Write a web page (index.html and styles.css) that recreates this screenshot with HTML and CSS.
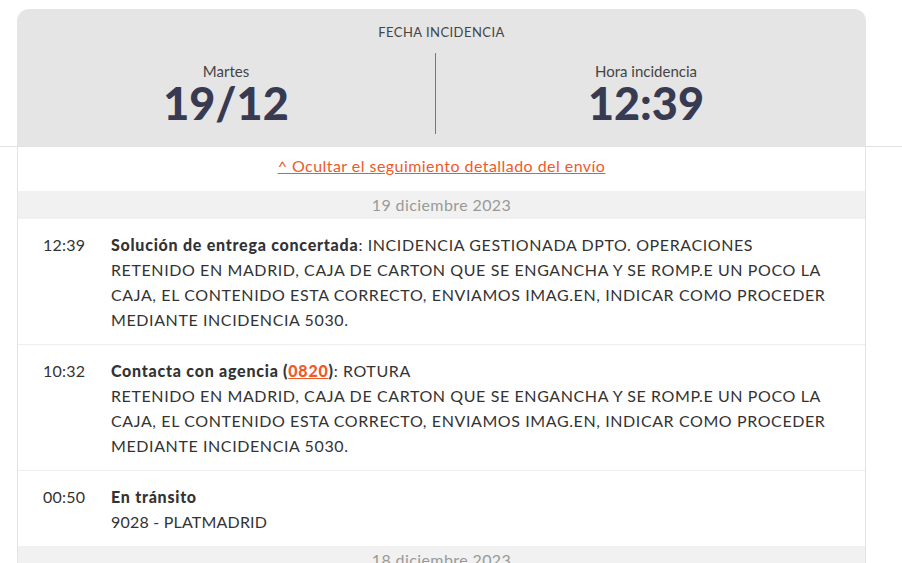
FILE: index.html
```html
<!DOCTYPE html>
<html lang="es">
<head>
<meta charset="utf-8">
<link rel="stylesheet" href="styles.css">
</head>
<body>
<div class="card">
  <div class="head">
    <div class="head-title">FECHA INCIDENCIA</div>
    <div class="head-cols">
      <div class="head-col head-col-left">
        <div class="head-label">Martes</div>
        <div class="head-value">19/12</div>
      </div>
      <div class="head-divider"></div>
      <div class="head-col head-col-right">
        <div class="head-label">Hora incidencia</div>
        <div class="head-value">12:39</div>
      </div>
    </div>
  </div>
  <div class="body">
    <div class="toggle"><a href="#">^ Ocultar el seguimiento detallado del envío</a></div>
    <div class="day">19 diciembre 2023</div>
    <div class="event">
      <div class="time">12:39</div>
      <div class="desc"><b>Solución de entrega concertada</b>: INCIDENCIA GESTIONADA DPTO. OPERACIONES RETENIDO EN MADRID, CAJA DE CARTON QUE SE ENGANCHA Y SE ROMP.E UN POCO LA CAJA, EL CONTENIDO ESTA CORRECTO, ENVIAMOS IMAG.EN, INDICAR COMO PROCEDER MEDIANTE INCIDENCIA 5030.</div>
    </div>
    <div class="event">
      <div class="time">10:32</div>
      <div class="desc"><b>Contacta con agencia (<a href="#">0820</a>)</b>: ROTURA<br>RETENIDO EN MADRID, CAJA DE CARTON QUE SE ENGANCHA Y SE ROMP.E UN POCO LA CAJA, EL CONTENIDO ESTA CORRECTO, ENVIAMOS IMAG.EN, INDICAR COMO PROCEDER MEDIANTE INCIDENCIA 5030.</div>
    </div>
    <div class="event">
      <div class="time">00:50</div>
      <div class="desc"><b>En tránsito</b><br><span class="plain">9028 - PLATMADRID</span></div>
    </div>
    <div class="day">18 diciembre 2023</div>
  </div>
</div>
</body>
</html>
```

FILE: styles.css
```css
html, body {
  margin: 0;
  padding: 0;
}
body {
  background: #fff linear-gradient(#e2e2e2, #e2e2e2) 0 146px / 100% 1px no-repeat;
  font-family: "Lato", "Open Sans", sans-serif;
  color: #333;
  height: 563px;
  overflow: hidden;
}
.card {
  margin: 9px 0 0 17px;
  width: 849px;
}
.head {
  background: #e5e5e5;
  border-radius: 12px 12px 0 0;
  height: 137px;
  box-sizing: border-box;
  padding-top: 15px;
  color: #444;
}
.head-title {
  text-align: center;
  font-size: 13px;
  line-height: 16px;
  letter-spacing: 0.45px;
}
.head-cols {
  display: flex;
  margin-top: 13px;
  height: 81px;
}
.head-col {
  text-align: center;
  padding-top: 9px;
}
.head-col-left {
  width: 418px;
  flex: none;
}
.head-col-right {
  flex: 1;
  padding-right: 10px;
}
.head-divider {
  width: 1px;
  background: #777;
}
.head-label {
  font-size: 15px;
  line-height: 18px;
}
.head-value {
  font-size: 45px;
  font-weight: 900;
  line-height: 46px;
  color: #383a52;
}
.body {
  border-left: 1px solid #e3e3e3;
  border-right: 1px solid #e3e3e3;
}
.toggle {
  text-align: center;
  padding: 6px 0 11px;
  font-size: 16px;
  line-height: 28px;
  letter-spacing: 0.45px;
}
.toggle a {
  color: #ee5a2a;
  text-decoration: underline;
}
.day {
  background: #f1f1f1;
  color: #999;
  text-align: center;
  font-size: 16px;
  line-height: 28px;
  letter-spacing: 0.4px;
}
.event {
  display: flex;
  padding: 13px 26px 12px 25px;
  font-size: 16px;
  line-height: 25px;
  letter-spacing: 0.6px;
  border-bottom: 1px solid #eeeeee;
}
.event:nth-last-child(2) {
  border-bottom: none;
}
.time {
  width: 68px;
  flex: none;
  letter-spacing: 0.2px;
}
.desc {
  flex: 1;
}
.desc b {
  font-weight: 900;
  letter-spacing: 0.75px;
}
.desc a {
  color: #ee5a2a;
  text-decoration: underline;
}
.plain {
  letter-spacing: 0.2px;
}
```
